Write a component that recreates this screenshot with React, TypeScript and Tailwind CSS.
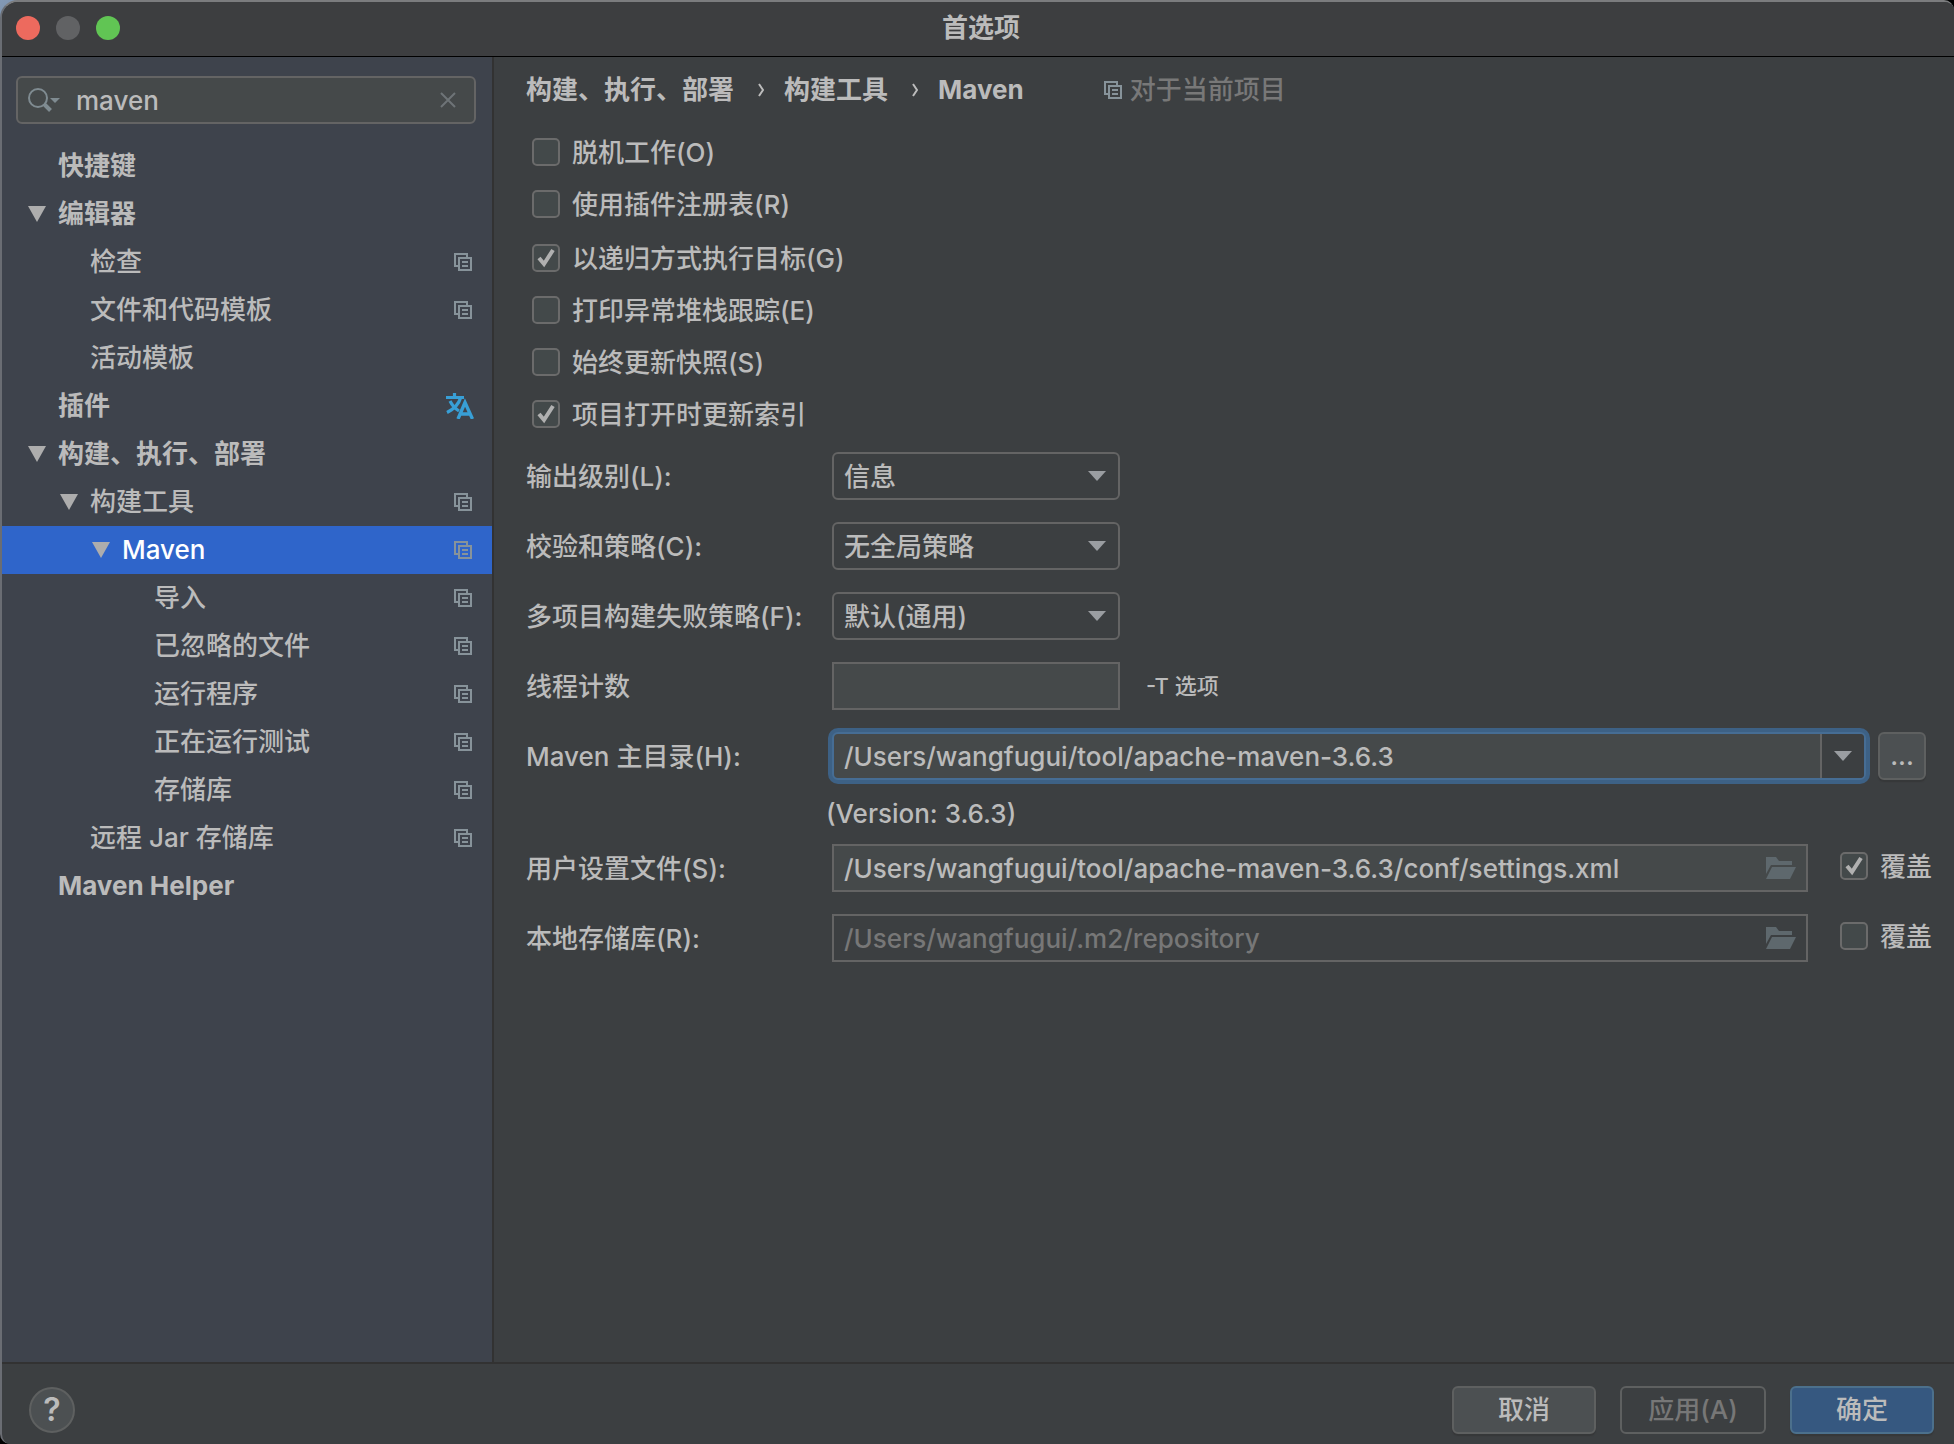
import React from "react";

const CopyIcon = ({ color = "#87939a" }: { color?: string }) => (
  <svg width="18" height="18" viewBox="0 0 18 18" fill="none" stroke={color} strokeWidth="2" className="shrink-0" aria-hidden="true">
    <path d="M4 13H1V1h12v3" />
    <path d="M5 5h12v12H5z" />
    <path d="M8 9h6M8 13h6" />
  </svg>
);

const TranslateIcon = () => (
  <svg width="28" height="26" viewBox="0 0 28 26" fill="none" stroke="#389fd6" strokeWidth="3" className="-mr-0.5 shrink-0" aria-hidden="true">
    <path d="M0 4.500h18M8.500 0v4M14.500 5C12.500 12 7 16.500 1 19.500M4 8c2 4 5 7.500 9 10" strokeWidth="3.200" />
    <path d="M12 26L19 9.500L26.500 26M14.500 21h9" strokeWidth="3.400" />
  </svg>
);

const TreeArrow = () => (
  <svg width="18" height="16" viewBox="0 0 18 16" className="shrink-0" aria-hidden="true">
    <path d="M0 0h18L9 16z" fill="#adadad" />
  </svg>
);

const ComboArrow = () => (
  <svg width="18" height="10" viewBox="0 0 18 10" className="pointer-events-none shrink-0" aria-hidden="true">
    <path d="M0 0h18L9 10z" fill="#9a9da1" />
  </svg>
);

const Chevron = () => (
  <svg width="8" height="14" viewBox="0 0 8 14" fill="none" stroke="#bbbbbb" strokeWidth="2" className="shrink-0" aria-hidden="true">
    <path d="M1 1l4 6l-4 6" />
  </svg>
);

const FolderIcon = () => (
  <svg width="30" height="22" viewBox="0 0 30 22" fill="#5e686d" aria-hidden="true">
    <path d="M0 0h10l3 4h13v4H5L0 17z" />
    <path d="M6 10h24l-6 12H0z" />
  </svg>
);

type Item = {
  label: string;
  level: number;
  bold?: boolean;
  open?: boolean;
  copy?: boolean;
  translate?: boolean;
  selected?: boolean;
};

const items: Item[] = [
  { label: "快捷键", level: 0, bold: true },
  { label: "编辑器", level: 0, bold: true, open: true },
  { label: "检查", level: 1, copy: true },
  { label: "文件和代码模板", level: 1, copy: true },
  { label: "活动模板", level: 1 },
  { label: "插件", level: 0, bold: true, translate: true },
  { label: "构建、执行、部署", level: 0, bold: true, open: true },
  { label: "构建工具", level: 1, open: true, copy: true },
  { label: "Maven", level: 2, open: true, copy: true, selected: true },
  { label: "导入", level: 3, copy: true },
  { label: "已忽略的文件", level: 3, copy: true },
  { label: "运行程序", level: 3, copy: true },
  { label: "正在运行测试", level: 3, copy: true },
  { label: "存储库", level: 3, copy: true },
  { label: "远程 Jar 存储库", level: 1, copy: true },
  { label: "Maven Helper", level: 0, bold: true },
];

const indents = ["pl-[26px]", "pl-[58px]", "pl-[90px]", "pl-[122px]"];

function TreeItem({ item }: { item: Item }) {
  return (
    <li>
      <button
        type="button"
        className={`flex h-12 w-full items-center pr-5 text-left ${indents[item.level]} ${
          item.selected ? "bg-[#2f65ca] text-white" : ""
        } ${item.bold ? "font-bold" : ""}`}
      >
        <span className="flex w-[30px] shrink-0">{item.open && <TreeArrow />}</span>
        <span className="flex-1 whitespace-nowrap">{item.label}</span>
        {item.copy && <CopyIcon />}
        {item.translate && <TranslateIcon />}
      </button>
    </li>
  );
}

function Check({ label, checked }: { label: string; checked?: boolean }) {
  return (
    <label className="flex h-7 items-center gap-3 whitespace-nowrap">
      <span className="relative flex h-7 w-7 shrink-0">
        <input
          type="checkbox"
          defaultChecked={checked}
          className="peer h-7 w-7 appearance-none rounded-[5px] border-2 border-[#6b6b6b] bg-[#43494a]"
        />
        <svg
          viewBox="0 0 28 28"
          className="pointer-events-none absolute inset-0 hidden h-7 w-7 peer-checked:block"
          fill="none"
          stroke="#b0b0b0"
          strokeWidth="4"
          aria-hidden="true"
        >
          <path d="M7 14l5 6L21 6" />
        </svg>
      </span>
      <span className="pt-0.5">{label}</span>
    </label>
  );
}

function Combo({ id, value }: { id: string; value: string }) {
  return (
    <div className="relative flex h-12 w-72 items-center">
      <select
        id={id}
        className="h-12 w-full appearance-none rounded-md border-2 border-[#646464] bg-[#3c3f41] pt-0.5 pr-10 pl-2.5"
      >
        <option>{value}</option>
      </select>
      <span className="pointer-events-none absolute right-3.5">
        <ComboArrow />
      </span>
    </div>
  );
}

function Row({ id, label, children }: { id: string; label: string; children: React.ReactNode }) {
  return (
    <div className="flex items-center">
      <label htmlFor={id} className="w-[306px] shrink-0 whitespace-nowrap pt-0.5">
        {label}
      </label>
      {children}
    </div>
  );
}

function PathRow({ id, label, value, on }: { id: string; label: string; value: string; on?: boolean }) {
  return (
    <Row id={id} label={label}>
      <div
        className={`flex h-12 min-w-0 flex-1 items-center border-2 border-[#646464] px-2.5 ${
          on ? "bg-[#45494a]" : "text-[#777777]"
        }`}
      >
        <input id={id} defaultValue={value} disabled={!on} className="min-w-0 flex-1 bg-transparent pt-0.5 outline-none" />
        <button type="button" aria-label="浏览">
          <FolderIcon />
        </button>
      </div>
      <div className="mr-[22px] ml-8 pb-1">
        <Check label="覆盖" checked={on} />
      </div>
    </Row>
  );
}

export default function App() {
  return (
    <div className="min-h-screen bg-linear-to-br from-[#8399b5] to-black to-20%">
      <div className="flex min-h-screen flex-col overflow-hidden rounded-tl-[18px] rounded-tr-[10px] rounded-bl-[10px] border-t-2 border-l-2 border-t-[#7b7c7e] border-l-[#6a6d73] bg-[#3c3f41] font-['Inter','Noto_Sans_CJK_SC',sans-serif] text-[26px] leading-9 font-medium text-[#bbbbbb]">
        <header className="flex h-[55px] items-center border-b border-black bg-[#3d3e40] pr-2 pb-0.5 pl-3.5">
          <div className="flex flex-1 gap-4">
            <button type="button" aria-label="关闭" className="h-6 w-6 rounded-full bg-[#ed6a5e]" />
            <button type="button" aria-label="最小化" className="h-6 w-6 rounded-full bg-[#616264]" />
            <button type="button" aria-label="缩放" className="h-6 w-6 rounded-full bg-[#61c554]" />
          </div>
          <h1 className="font-bold">首选项</h1>
          <div className="flex-1" />
        </header>

        <div className="flex flex-1">
          <aside className="w-[492px] shrink-0 border-r-2 border-[#323232] bg-[#3e434c]">
            <div className="mt-[19px] mr-4 ml-3.5 flex h-12 items-center rounded-md border-2 border-[#646464] bg-[#45494a] pr-[18px] pl-2.5">
              <svg width="34" height="24" viewBox="0 0 34 24" fill="none" stroke="#7f8b91" strokeWidth="2" aria-hidden="true">
                <circle cx="10" cy="10" r="9" />
                <path d="M16 16l6.500 6.500" strokeWidth="4" />
                <path d="M22 10h10l-5 5z" fill="#7f8b91" stroke="none" />
              </svg>
              <input aria-label="搜索" defaultValue="maven" className="ml-3.5 min-w-0 flex-1 bg-transparent pt-0.5 outline-none" />
              <button type="button" aria-label="清除">
                <svg width="16" height="16" viewBox="0 0 16 16" stroke="#6e7477" strokeWidth="2" aria-hidden="true">
                  <path d="M1 1l14 14M15 1L1 15" />
                </svg>
              </button>
            </div>
            <ul className="mt-[18px]">
              {items.map((item) => (
                <TreeItem key={item.label} item={item} />
              ))}
            </ul>
          </aside>

          <main className="min-w-0 flex-1 pt-[15px] pl-8">
            <div className="flex items-center whitespace-nowrap">
              <nav className="flex items-center font-bold">
                <span>构建、执行、部署</span>
                <span className="mr-[18px] ml-6">
                  <Chevron />
                </span>
                <span>构建工具</span>
                <span className="mr-[18px] ml-6">
                  <Chevron />
                </span>
                <span>Maven</span>
              </nav>
              <div className="ml-20 flex items-center gap-2 text-[#787878]">
                <CopyIcon />
                对于当前项目
              </div>
            </div>

            <div className="mt-[30px] flex flex-col gap-[26px] pl-1.5">
              <div className="flex flex-col items-start gap-6">
                <Check label="脱机工作(O)" />
                <Check label="使用插件注册表(R)" />
              </div>
              <div className="flex flex-col items-start gap-6">
                <Check label="以递归方式执行目标(G)" checked />
                <Check label="打印异常堆栈跟踪(E)" />
                <Check label="始终更新快照(S)" />
                <Check label="项目打开时更新索引" checked />
              </div>
            </div>

            <div className="mt-6 flex flex-col gap-[22px]">
              <Row id="output" label="输出级别(L):">
                <Combo id="output" value="信息" />
              </Row>
              <Row id="checksum" label="校验和策略(C):">
                <Combo id="checksum" value="无全局策略" />
              </Row>
              <Row id="fail" label="多项目构建失败策略(F):">
                <Combo id="fail" value="默认(通用)" />
              </Row>
              <Row id="threads" label="线程计数">
                <input id="threads" className="h-12 w-72 border-2 border-[#646464] bg-[#45494a] px-2.5 outline-none" />
                <span className="ml-[26px] text-[22px]">-T 选项</span>
              </Row>
              <Row id="home" label="Maven 主目录(H):">
                <div className="flex h-12 min-w-0 flex-1 items-center rounded-md border-2 border-[#466d94] bg-[#45494a] pl-2.5 ring-4 ring-[#3d6185]">
                  <input
                    id="home"
                    defaultValue="/Users/wangfugui/tool/apache-maven-3.6.3"
                    className="min-w-0 flex-1 bg-transparent pt-0.5 outline-none"
                  />
                  <button
                    type="button"
                    aria-label="展开"
                    className="flex h-11 w-11 items-center justify-center rounded-r border-l-2 border-[#646464] bg-[#3c3f41]"
                  >
                    <ComboArrow />
                  </button>
                </div>
                <button
                  type="button"
                  aria-label="浏览目录"
                  className="mr-7 ml-3 h-12 w-12 shrink-0 rounded-md border-2 border-[#5e6060] bg-[#4c5052] shadow-[0_2px_1px_#363839]"
                >
                  ...
                </button>
              </Row>
            </div>

            <p className="mt-4 pl-[300px]">(Version: 3.6.3)</p>

            <div className="mt-3 flex flex-col gap-[22px]">
              <PathRow
                id="settings"
                label="用户设置文件(S):"
                value="/Users/wangfugui/tool/apache-maven-3.6.3/conf/settings.xml"
                on
              />
              <PathRow id="repo" label="本地存储库(R):" value="/Users/wangfugui/.m2/repository" />
            </div>
          </main>
        </div>

        <footer className="flex h-[82px] items-center border-t-2 border-[#323232] pt-4 pr-5 pb-1 pl-[27px]">
          <button
            type="button"
            aria-label="帮助"
            className="h-[46px] w-[46px] rounded-full border-2 border-[#5e6060] bg-[#4c5052] text-[32px] leading-10 font-semibold"
          >
            ?
          </button>
          <div className="ml-auto flex gap-6">
            <button type="button" className="h-12 w-36 rounded-md border-2 border-[#5e6060] bg-[#4c5052] shadow-[0_2px_1px_#363839]">
              取消
            </button>
            <button type="button" disabled className="h-12 w-[146px] rounded-md border-2 border-[#5e6060] text-[#777777]">
              应用(A)
            </button>
            <button type="button" className="h-12 w-36 rounded-md border-2 border-[#4c708c] bg-[#365880] shadow-[0_2px_1px_#363839]">
              确定
            </button>
          </div>
        </footer>
      </div>
    </div>
  );
}
